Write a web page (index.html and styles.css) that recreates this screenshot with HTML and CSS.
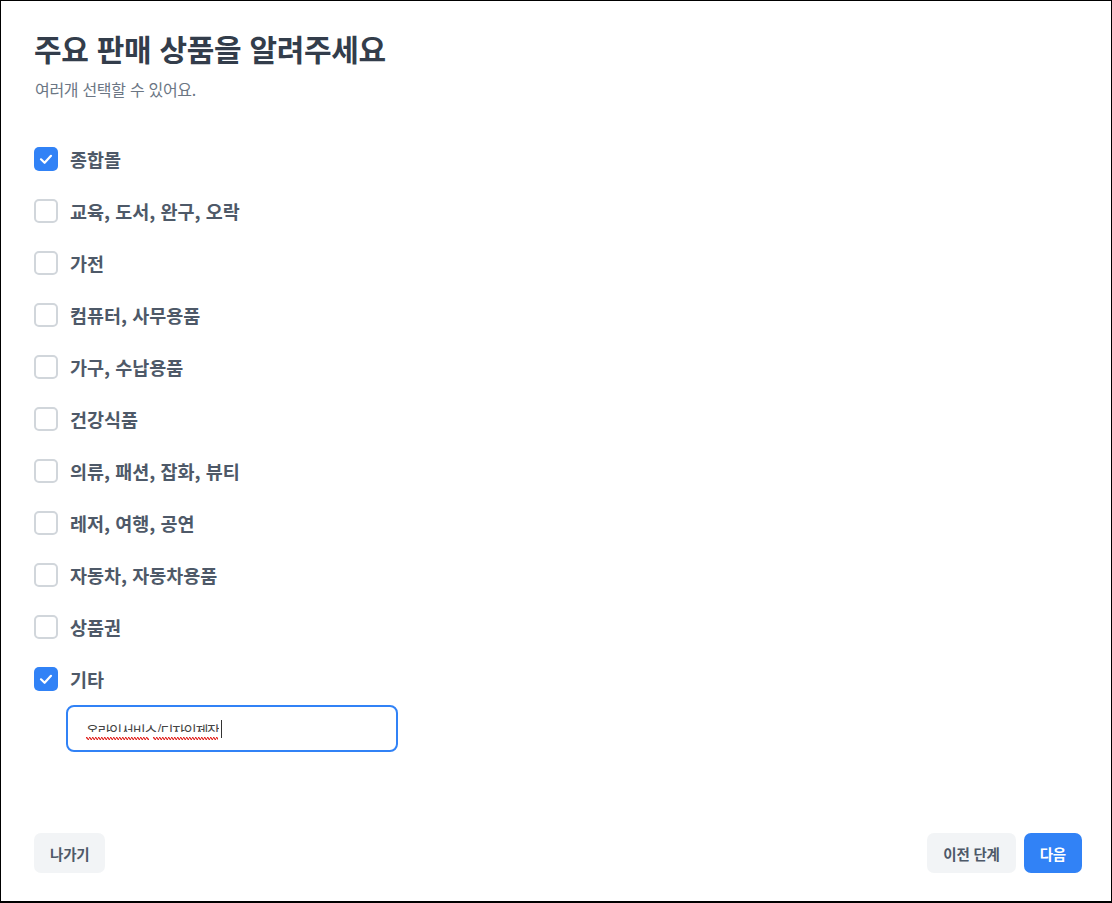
FILE: index.html
```html
<!DOCTYPE html>
<html lang="ko">
<head>
<meta charset="utf-8">
<link rel="stylesheet" href="styles.css">
</head>
<body>
<div class="frame">
  <div class="content">
    <h1 class="title">주요 판매 상품을 알려주세요</h1>
    <p class="subtitle">여러개 선택할 수 있어요.</p>
    <ul class="options">
      <li class="option"><span class="box checked"><svg viewBox="0 0 24 24" width="24" height="24"><path d="M7 12.3l3.6 3.5 6.4-7" fill="none" stroke="#fff" stroke-width="2.2" stroke-linecap="round" stroke-linejoin="round"/></svg></span><span class="label">종합몰</span></li>
      <li class="option"><span class="box"></span><span class="label">교육, 도서, 완구, 오락</span></li>
      <li class="option"><span class="box"></span><span class="label">가전</span></li>
      <li class="option"><span class="box"></span><span class="label">컴퓨터, 사무용품</span></li>
      <li class="option"><span class="box"></span><span class="label">가구, 수납용품</span></li>
      <li class="option"><span class="box"></span><span class="label">건강식품</span></li>
      <li class="option"><span class="box"></span><span class="label">의류, 패션, 잡화, 뷰티</span></li>
      <li class="option"><span class="box"></span><span class="label">레저, 여행, 공연</span></li>
      <li class="option"><span class="box"></span><span class="label">자동차, 자동차용품</span></li>
      <li class="option"><span class="box"></span><span class="label">상품권</span></li>
      <li class="option"><span class="box checked"><svg viewBox="0 0 24 24" width="24" height="24"><path d="M7 12.3l3.6 3.5 6.4-7" fill="none" stroke="#fff" stroke-width="2.2" stroke-linecap="round" stroke-linejoin="round"/></svg></span><span class="label">기타</span></li>
    </ul>
    <div class="input">
      <div class="typed">
        <span class="clip"><span class="clip-text">온라인서비스/디자인제작</span></span>
        <span class="caret"></span>
      </div>
      <div class="squiggles">
        <span class="wave w1"></span>
        <span class="wave w2"></span>
      </div>
    </div>
  </div>
  <div class="footer">
    <button class="btn">나가기</button>
    <div class="right">
      <button class="btn">이전 단계</button>
      <button class="btn primary">다음</button>
    </div>
  </div>
</div>
</body>
</html>
```
FILE: styles.css
```css
* { box-sizing: border-box; }
html, body { margin: 0; padding: 0; background: #fff; }
body {
  font-family: "Noto Sans CJK KR", "Noto Sans", sans-serif;
  color: #333d4b;
}
.frame {
  width: 1112px;
  height: 903px;
  border: 1px solid #000;
  border-bottom-width: 2px;
  display: flex;
  flex-direction: column;
  justify-content: space-between;
}
.content {
  padding: 25px 0 0 33px;
}
.title {
  margin: 0;
  font-size: 30px;
  font-weight: 700;
  line-height: 44px;
  letter-spacing: -0.3px;
  color: #333d4b;
}
.subtitle {
  margin: 8px 0 0 1px;
  font-size: 16px;
  line-height: 22px;
  letter-spacing: -0.3px;
  color: #6b7684;
}
.options {
  list-style: none;
  margin: 47px 0 0;
  padding: 0;
  display: flex;
  flex-direction: column;
  gap: 28px;
}
.option {
  display: flex;
  align-items: center;
  gap: 12px;
  height: 24px;
}
.box {
  width: 24px;
  height: 24px;
  border: 2px solid #d1d6db;
  border-radius: 5px;
  background: #fff;
  flex: none;
  display: flex;
  align-items: center;
  justify-content: center;
}
.box.checked {
  border: none;
  background: #3182f6;
}
.label {
  font-size: 18.5px;
  font-weight: 700;
  color: #4e5968;
  letter-spacing: 0;
  line-height: 24px;
}
.input {
  margin: 14px 0 0 32px;
  width: 332px;
  height: 47px;
  border: 2px solid #3182f6;
  border-radius: 8px;
  padding: 13px 0 0 18px;
  display: flex;
  flex-direction: column;
}
.typed {
  display: flex;
  align-items: flex-start;
  height: 18px;
}
.clip {
  display: block;
  height: 10px;
  overflow: hidden;
  margin-top: 2px;
}
.clip-text {
  display: block;
  font-size: 14px;
  line-height: 16px;
  color: #444;
  letter-spacing: -1.2px;
}
.caret {
  width: 1px;
  height: 18px;
  background: #333;
  margin-left: 2px;
}
.squiggles {
  display: flex;
  gap: 4px;
  height: 3px;
  margin-top: -1px;
}
.wave {
  display: block;
  height: 3px;
  background-image:
    linear-gradient(45deg, transparent 40%, #e0231f 40%, #e0231f 60%, transparent 60%),
    linear-gradient(-45deg, transparent 40%, #e0231f 40%, #e0231f 60%, transparent 60%);
  background-size: 3px 3px;
  background-position: 0 0, 1.5px 0;
}
.w1 { width: 63px; }
.w2 { width: 65px; }
.footer {
  display: flex;
  justify-content: space-between;
  align-items: center;
  padding: 0 29px 28px 33px;
}
.right {
  display: flex;
  gap: 8px;
}
.btn {
  font-family: "Noto Sans CJK KR", "Noto Sans", sans-serif;
  font-size: 14.5px;
  font-weight: 700;
  letter-spacing: -0.2px;
  height: 40px;
  padding: 0 16px;
  border: none;
  border-radius: 7px;
  background: #f2f4f6;
  color: #4e5968;
}
.btn.primary {
  background: #3182f6;
  color: #fff;
}
```
